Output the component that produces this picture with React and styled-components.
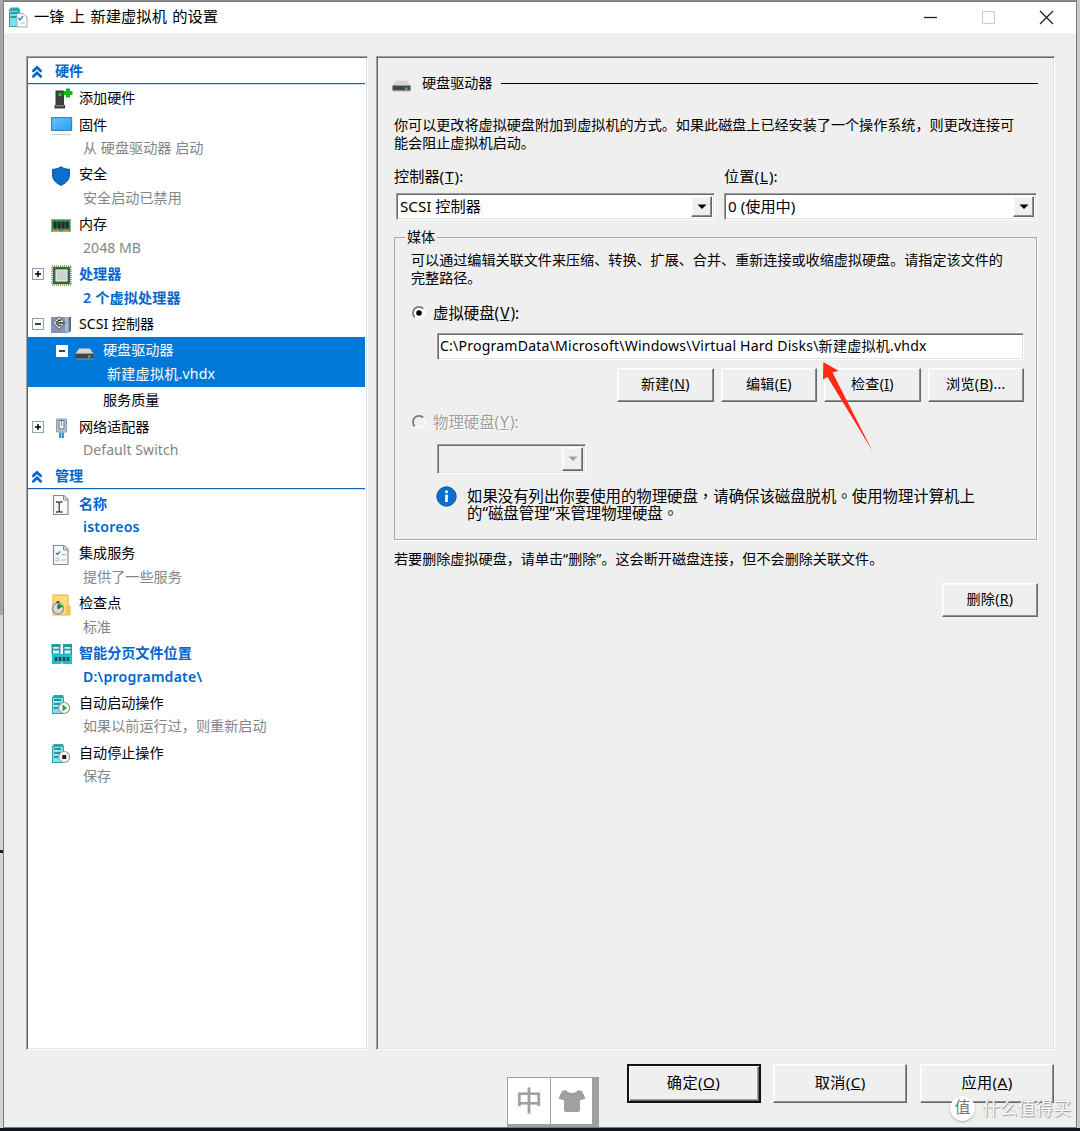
import React from "react";
import styled, { createGlobalStyle, css } from "styled-components";

const GlobalStyle = createGlobalStyle`
  * {
    box-sizing: border-box;
  }

  body {
    margin: 0;
    overflow: hidden;
    background: #c9c9c9;
    font-family: "Noto Sans", "Noto Sans CJK SC", sans-serif;
    font-size: 14.1px;
    color: #000;
  }

  svg {
    display: block;
  }
`;

const sunken = css`
  border: 1px solid;
  border-color: #a0a0a0 #fff #fff #a0a0a0;
  box-shadow: inset 1px 1px 0 #696969, inset -1px -1px 0 #e3e3e3;
`;

const raised = css`
  border: 1px solid;
  border-color: #fff #696969 #696969 #fff;
  box-shadow: inset -1px -1px 0 #8f8f8f, inset 1px 1px 0 #f8f8f8;
`;

const Desktop = styled.div`
  position: relative;
  width: 1080px;
  height: 1131px;
  padding: 1px 3px 3px;
  overflow: hidden;
  background:
    linear-gradient(#10161c, #10161c) 0 100% / 100% 3px no-repeat,
    linear-gradient(#222, #222) 0 850px / 3px 3px no-repeat,
    linear-gradient(#a6a6a6, #a6a6a6) 0 0 / 3px 615px no-repeat,
    linear-gradient(90deg, #d4d4d4 0 3px, #8a8a8a 3px 1077px, #c9c9c9 1077px);
`;

const Window = styled.div`
  display: flex;
  flex-direction: column;
  height: 1127px;
  border: 1px solid #7b7b7b;
  background: #efefef;
`;

const TitleBar = styled.header`
  display: flex;
  align-items: center;
  height: 31px;
  padding: 0 22px 0 4px;
  background: #fff;
`;

const Title = styled.h1`
  flex: 1;
  margin: -4px 0 0 6px;
  font-size: 15.3px;
  font-weight: 400;
  line-height: 24px;
  word-spacing: 1.3px;
`;

const WindowControls = styled.div`
  display: flex;
  gap: 43px;
`;

const Body = styled.main`
  display: flex;
  gap: 8px;
  height: 994px;
  margin: 23px 21px 0 22px;
`;

const Tree = styled.nav`
  ${sunken}
  width: 342px;
  padding: 1px 2px 2px 1px;
  background: #fff;
`;

const SectionHead = styled.div`
  display: flex;
  align-items: center;
  gap: 12px;
  height: 26px;
  padding: 1px 3px 0;
  border-bottom: 1px solid #0f62b8;
  box-shadow: 0 1px 0 #c9dff5;
  color: #0066cc;
  font-weight: 600;
  line-height: 24px;
`;

const Nodes = styled.div`
  padding-top: 1.2px;
`;

const Node = styled.div`
  display: flex;
  align-items: flex-start;
  padding-left: ${props => (props.$level === 2 ? 28 : 4)}px;
  color: ${props => (props.$selected ? "#fff" : props.$changed ? "#0066cc" : "#000")};
  background: ${props => (props.$selected ? "#0078d7" : "transparent")};
  font-weight: ${props => (props.$changed ? 600 : 400)};
`;

const ExpanderSlot = styled.div`
  display: flex;
  align-items: center;
  width: 19px;
  height: 26.5px;
`;

const IconSlot = styled.div`
  display: flex;
  align-items: center;
  width: 28px;
  height: 26.5px;
  padding-top: ${props => (props.$level === 2 ? 7 : 2)}px;
`;

const NodeTitle = styled.div`
  height: 26.5px;
  line-height: 26px;
  white-space: nowrap;
`;

const NodeDetail = styled.div`
  height: 23.3px;
  padding-left: 4px;
  line-height: 20px;
  white-space: nowrap;
  letter-spacing: ${props => (props.$plain ? 0.03 : 0.2)}px;
  color: ${props => (props.$plain ? "#858585" : "inherit")};
`;

const Panel = styled.section`
  ${sunken}
  width: 679px;
  padding: 14px 16px 0 17px;
`;

const PanelHead = styled.div`
  display: flex;
  align-items: center;
  height: 24px;

  svg {
    margin: 5px 0 0 -2px;
  }
`;

const PanelTitle = styled.h2`
  margin: 0 9px 0 11px;
  font-size: 14.1px;
  font-weight: 400;
  line-height: 24px;
`;

const HeadRule = styled.div`
  flex: 1;
  height: 1px;
  background: #000;
`;

const Paragraph = styled.p`
  margin: ${props => props.$top || 0}px 0 0;
  line-height: 18px;
  white-space: nowrap;
`;

const ComboRow = styled.div`
  display: grid;
  grid-template-columns: 321px 314px;
  gap: 9px;
  margin-top: 12px;
`;

const Label = styled.div`
  height: 29px;
  font-size: 15.2px;
  line-height: 24px;

  u {
    margin: 0 1px;
  }
`;

const Combo = styled.div`
  ${sunken}
  display: flex;
  align-items: center;
  justify-content: space-between;
  width: ${props => props.$width}px;
  height: ${props => props.$height || 27}px;
  margin-top: ${props => props.$top || 0}px;
  margin-left: ${props => props.$indent || 0}px;
  padding: 2px 2px 2px 3px;
  background: ${props => (props.$disabled ? "#efefef" : "#fff")};
  font-size: 15.2px;
  line-height: 20px;
`;

const ComboValue = styled.span`
  margin-top: -2px;
`;

const DropButton = styled.div`
  ${raised}
  display: flex;
  align-items: center;
  justify-content: center;
  width: 21px;
  height: 100%;
  background: #efefef;
`;

const Group = styled.fieldset`
  display: block;
  width: 643px;
  height: 311px;
  margin: 9px 0 0;
  padding: 1px 12px 0 16px;
  border: 1px solid #a8a8a8;
  box-shadow: 1px 1px 0 #fff;
`;

const Legend = styled.legend`
  margin-left: -6px;
  padding: 0 2px;
  line-height: 16px;
  font-size: 14.1px;
  background: #efefef;
`;

const RadioRow = styled.div`
  display: flex;
  align-items: center;
  gap: 7px;
  height: 24px;
  margin: ${props => props.$top}px 0 0 1px;
  font-size: 15.4px;
  line-height: 22px;
  color: ${props => (props.$disabled ? "#a0a0a0" : "#000")};
  text-shadow: ${props => (props.$disabled ? "1px 1px 0 #fff" : "none")};

  span {
    margin-top: 2px;
  }

  u {
    margin: 0 1px;
  }
`;

const PathField = styled.div`
  ${sunken}
  width: 587px;
  height: 27px;
  margin: 8px 0 0 26px;
  padding-left: 2px;
  background: #fff;
  line-height: 24px;
  letter-spacing: 0.19px;
  white-space: nowrap;
`;

const ButtonRow = styled.div`
  display: flex;
  justify-content: flex-end;
  gap: ${props => props.$gap || 7.2}px;
  margin-top: ${props => props.$top}px;
`;

const Button = styled.button`
  ${raised}
  flex: none;
  width: ${props => (props.$large ? 134 : 96.3)}px;
  height: ${props => (props.$large ? 39 : 34)}px;
  padding: 0 0 ${props => (props.$large ? 5 : 4)}px;
  background: #efefef;
  font-family: inherit;
  font-size: ${props => (props.$large ? 15.2 : 14.1)}px;
  letter-spacing: ${props => (props.$large ? 0.4 : 0.3)}px;
  color: #000;

  ${props => props.$primary && css`
    border: 2px solid #111;
    box-shadow: inset 1px 1px 0 #fff, inset -1px -1px 0 #696969, inset -2px -2px 0 #a0a0a0;
  `}
`;

const Note = styled.div`
  display: flex;
  gap: 10px;
  margin: 12px 0 0 25px;
`;

// The TC face centres full-width punctuation in its square
const NoteText = styled.p`
  margin: 2px 0 0;
  font-family: "Noto Sans", "Noto Sans CJK TC", sans-serif;
  font-size: 15.4px;
  line-height: 17px;
  white-space: nowrap;
`;

const Arrow = styled.svg`
  position: absolute;
  left: 820px;
  top: 360px;
`;

// Input method bar that floats over the bottom of the window
const ImeBar = styled.div`
  position: absolute;
  left: 507px;
  top: 1077px;
  display: grid;
  grid-template-columns: 42px 41px;
  gap: 1px;
  width: 92px;
  height: 50px;
  padding: 1px 7px 3px 1px;
  background: #a0a0a0;
`;

const ImeKey = styled.div`
  display: flex;
  align-items: center;
  justify-content: center;
  background: #fff;
  color: #a0a0a0;
  font-size: 27px;
  font-weight: 500;
  line-height: 44px;
`;

const Watermark = styled.div`
  position: absolute;
  left: 950px;
  top: 1095px;
  display: flex;
  align-items: center;
  gap: 7px;
  color: #fff;
  font-size: 17.8px;
  line-height: 26px;
  text-shadow: 1px 1px 1px #999, 0 0 1px #aaa;
`;

const WatermarkSeal = styled.span`
  width: 25px;
  height: 25px;
  border-radius: 50%;
  background: #fff;
  box-shadow: 0 1px 2px #aaa;
  color: #777;
  font-size: 16px;
  line-height: 23px;
  text-align: center;
  text-shadow: none;
`;

const Expander = ({ open, bare }) => (
  <svg width="12" height="12" viewBox="0 0 12 12">
    <rect x=".5" y=".5" width="11" height="11" fill="#fff" stroke={bare ? "#fff" : "#8aa0b8"} />
    <path d={open ? "M3 6h6" : "M3 6h6M6 3v6"} stroke="#000" strokeWidth="1.5" />
  </svg>
);

const Chevrons = () => (
  <svg width="12" height="13" viewBox="0 0 12 13" fill="#0066cc">
    <path d="M6 .5 10.800 5v2.200H9.200L6 4.200 2.800 7.200H1.200V5zM6 6l4.800 4.500v2.200H9.200L6 9.700l-3.200 3H1.200v-2.200z" />
  </svg>
);

const Server = ({ children }) => (
  <svg width="21" height="21" viewBox="0 0 21 21">
    <path d="M1 3.500 3 1h9l1 2.500V20H1z" fill="#2aa5b0" />
    <path d="M2 4h10v15H2z" fill="#7fe3ea" />
    <path d="M3 6h7M3 10h7M3 14h4" stroke="#127a85" strokeWidth="1.300" />
    <path d="M4 7.500h2M4 11.500h2" stroke="#fff" />
    {children}
  </svg>
);

const Sheet = ({ children }) => (
  <svg width="21" height="22" viewBox="0 0 21 22">
    <path d="M2.500 1.500h10.500L17 5.500v15H2.500z" fill="#fafafa" stroke="#8b8b8b" strokeWidth="1.200" />
    <path d="M12.500 1.500v4.500H17" fill="#ddd" stroke="#8b8b8b" />
    {children}
  </svg>
);

const Disk = ({ width = 19 }) => (
  <svg width={width} height="12" viewBox="0 0 19 12">
    <path d="M4 .5h11l3.500 5.500H.5z" fill="#d6d6d6" />
    <path d="M.5 5.500h18v5h-18z" fill="#454545" />
    <path d="M.5 5.500h18M.5 11h18" stroke="#9a9a9a" strokeWidth=".8" />
    <rect x="13" y="7.500" width="2.500" height="2" fill="#35d63e" />
  </svg>
);

const icons = {
  add: (
    <svg width="22" height="22" viewBox="0 0 22 22">
      <path d="M4.500 2.500h8.500V17H4.500zM3.500 17h10.500v3.500H3.500z" fill="#3c3c3c" />
      <path d="M4.500 17.800h8.500" stroke="#999" />
      <circle cx="9" cy="6.500" r="2" fill="#12c41c" />
      <path d="M12.500 3H15V.5h4V3h2.500v4H19v2.500h-4V7h-2.500z" fill="#18b51e" />
    </svg>
  ),
  firmware: (
    <svg width="22" height="20" viewBox="0 0 22 20">
      <defs>
        <linearGradient id="screen" x2="1" y2="1">
          <stop stopColor="#6cc3ff" />
          <stop offset="1" stopColor="#22a0f4" />
        </linearGradient>
      </defs>
      <rect x=".6" y="1.600" width="20" height="12.800" fill="url(#screen)" stroke="#3d86b8" strokeWidth="1.200" />
      <path d="M9 15h3v2H9z" fill="#e8edf0" />
      <path d="M1 18.500h19" stroke="#cbd3d8" strokeWidth="1.300" />
    </svg>
  ),
  security: (
    <svg width="20" height="20" viewBox="0 0 20 20">
      <path d="M10 .8C7.500 2.500 4.500 3.300 1.500 3.300V9c0 5 4 8.500 8.500 10.400C14.500 17.500 18.500 14 18.500 9V3.300C15.500 3.300 12.500 2.500 10 .8z" fill="#0a6fd0" stroke="#17568f" />
    </svg>
  ),
  memory: (
    <svg width="20" height="14" viewBox="0 0 20 14">
      <path d="M.5.5h19v12H.5z" fill="#3f8a5b" stroke="#7eb18d" />
      <path d="M2 3h16v6H2z" fill="#2d5c43" />
      <path d="M3 2.500h2.500v7H3zM7 2.500h2.500v7H7zM11 2.500h2.500v7H11zM15 2.500h2.500v7H15z" fill="#232b27" />
      <path d="M2 12h6M12 12h6" stroke="#e09537" strokeWidth="2" />
    </svg>
  ),
  cpu: (
    <svg width="21" height="21" viewBox="0 0 21 21">
      <rect x="1" y="1" width="19" height="19" fill="none" stroke="#b9a469" strokeWidth="2" strokeDasharray="1 1" />
      <rect x="1.800" y="1.800" width="17.400" height="17.400" fill="#2f6a4e" />
      <rect x="5" y="5" width="11" height="11" fill="#d0d0d0" stroke="#f4f4f4" />
    </svg>
  ),
  scsi: (
    <svg width="21" height="18" viewBox="0 0 21 18">
      <path d="M0 1h20v14l-3 2H0z" fill="#7f96b8" />
      <path d="M14 1h3v15h-3z" fill="#a9bbd2" />
      <path d="M18.500 1H20v14l-1.500 1z" fill="#4d658a" />
      <path d="m8 .7 6.300 6.300L8 13.300 1.700 7z" fill="#e7e7e7" stroke="#555" />
      <path d="M10 4.500 8 4 5 7l3 3 2.500-1M7 7h6" fill="none" stroke="#333" strokeWidth="1.300" />
    </svg>
  ),
  disk: <Disk />,
  network: (
    <svg width="21" height="22" viewBox="0 0 21 22">
      <path d="M5.500 2h10v13h-10z" fill="#b8c9da" stroke="#8d9eb0" />
      <path d="M8 3.500h5V12H8z" fill="#eef3f8" stroke="#60758b" />
      <path d="M10.500 4v5" stroke="#8fa0b2" />
      <path d="M8 15.500h5V21H8z" fill="#2e9ec4" />
      <path d="M10.500 15.500V21" stroke="#83d2ea" />
    </svg>
  ),
  name: (
    <Sheet>
      <path d="M5 8h2.200l1 1 1-1h2.200M8.200 9v8M5 18h2.200l1-1 1 1h2.200" fill="none" stroke="#444" strokeWidth="1.300" />
    </Sheet>
  ),
  services: (
    <Sheet>
      <path d="m5 9 1.500 1.500L9 7.500" fill="none" stroke="#2484d8" strokeWidth="1.500" />
      <path d="M10.500 10.500H15M10.500 16H15" stroke="#aaa" />
      <rect x="5" y="14" width="3" height="3" fill="none" stroke="#bbb" />
    </Sheet>
  ),
  checkpoint: (
    <svg width="21" height="22" viewBox="0 0 21 22">
      <path d="M2 1h15v11h2v9H2z" fill="#fbdc76" stroke="#dfb445" />
      <path d="M15 20v-8h4v8z" fill="#f3c84e" />
      <circle cx="7" cy="14.500" r="5.500" fill="#d9d9d9" stroke="#929292" strokeWidth="1.300" />
      <path d="M5.500 8h3" stroke="#555" strokeWidth="2" />
      <path d="m7 9.500 5.500 3L7 15z" fill="#169b25" />
      <path d="M7 15v-4" stroke="#333" />
    </svg>
  ),
  paging: (
    <svg width="22" height="22" viewBox="0 0 22 22">
      <path d="M.5 1h9v10h-9zM12 1h9v10h-9z" fill="#239aa3" />
      <path d="M2 4h6v1.800H2zM2 7.500h6v3H2zM13.500 4h6v1.800h-6zM13.500 7.500h6v3h-6z" fill="#d2f7f8" />
      <path d="M1 11h20v10H1z" fill="#17c2d0" />
      <path d="M3.500 14h15v4h-15z" fill="#3c8d94" />
      <path d="M4 14h2v4H4zM8 14h2v4H8zM12 14h2v4h-2zM16 14h2v4h-2z" fill="#164c54" />
      <path d="M11 19v2" stroke="#fff" />
    </svg>
  ),
  start: (
    <Server>
      <circle cx="13.200" cy="14" r="5.500" fill="#f6f6f6" stroke="#999" strokeWidth="1.200" />
      <path d="m11.500 10.500 4.500 3.500-4.500 3.500z" fill="#22a82b" />
    </Server>
  ),
  stop: (
    <Server>
      <circle cx="13.200" cy="14" r="5.500" fill="#f6f6f6" stroke="#999" strokeWidth="1.200" />
      <path d="M11.200 12h4v4h-4z" fill="#222" />
    </Server>
  ),
};

const AppIcon = () => (
  <svg width="20" height="21" viewBox="0 0 20 21">
    <path d="M1 3 3 .5h8L12 3v17H1z" fill="#28a7b2" />
    <path d="M2 4h8v15H2z" fill="#77dfe7" />
    <path d="M2.500 6h8M2.500 10h6" stroke="#147d88" strokeWidth="1.400" />
    <path d="M9 6.500h6l4 3.500v10H9z" fill="#fafafa" stroke="#aaa" />
    <path d="m10.500 11 1.500 2 3-4" fill="none" stroke="#2484d8" strokeWidth="1.300" />
    <path d="M13 16h4" stroke="#bbb" />
  </svg>
);

const Radio = ({ checked }) => (
  <svg width="14" height="14" viewBox="0 0 14 14">
    <circle cx="7" cy="7" r="6" fill={checked ? "#fff" : "#efefef"} stroke="#fff" strokeWidth="1.500" />
    <path d="M2.700 11.300A6 6 0 0 1 11.300 2.700" fill="none" stroke="#777" strokeWidth="1.700" />
    {checked && <circle cx="7" cy="7" r="2.800" fill="#000" />}
  </svg>
);

const Drop = ({ disabled }) => (
  <DropButton>
    <svg width="10" height="6" viewBox="0 0 10 6">
      <path d="M.5.5h9L5 5z" fill={disabled ? "#a0a0a0" : "#000"} />
    </svg>
  </DropButton>
);

const InfoIcon = () => (
  <svg width="21" height="21" viewBox="0 0 21 21">
    <circle cx="10.500" cy="10.500" r="9.700" fill="#0b6fce" stroke="#0a559e" />
    <path d="M9.200 4.500h2.600V7H9.200zM9.200 8.500h2.600V16H9.200z" fill="#fff" />
  </svg>
);

const hardware = [
  { icon: "add", title: "添加硬件" },
  { icon: "firmware", title: "固件", detail: "从 硬盘驱动器 启动" },
  { icon: "security", title: "安全", detail: "安全启动已禁用" },
  { icon: "memory", title: "内存", detail: "2048 MB" },
  { icon: "cpu", title: "处理器", detail: "2 个虚拟处理器", expander: "closed", changed: true },
  { icon: "scsi", title: "SCSI 控制器", expander: "open" },
  { icon: "disk", title: "硬盘驱动器", detail: "新建虚拟机.vhdx", expander: "open", level: 2, selected: true },
  { title: "服务质量", level: 2 },
  { icon: "network", title: "网络适配器", detail: "Default Switch", expander: "closed" },
];

const management = [
  { icon: "name", title: "名称", detail: "istoreos", changed: true },
  { icon: "services", title: "集成服务", detail: "提供了一些服务" },
  { icon: "checkpoint", title: "检查点", detail: "标准" },
  { icon: "paging", title: "智能分页文件位置", detail: "D:\\programdate\\", changed: true },
  { icon: "start", title: "自动启动操作", detail: "如果以前运行过，则重新启动" },
  { icon: "stop", title: "自动停止操作", detail: "保存" },
];

const TreeSection = ({ title, items }) => (
  <>
    <SectionHead><Chevrons />{title}</SectionHead>
    <Nodes>
      {items.map(item => (
        <Node
          key={item.title}
          $level={item.level}
          $selected={item.selected}
          $changed={item.changed}
        >
          <ExpanderSlot>
            {item.expander && <Expander open={item.expander === "open"} bare={item.selected} />}
          </ExpanderSlot>
          <IconSlot $level={item.level}>{icons[item.icon]}</IconSlot>
          <div>
            <NodeTitle>{item.title}</NodeTitle>
            {item.detail && (
              <NodeDetail $plain={!item.changed && !item.selected}>{item.detail}</NodeDetail>
            )}
          </div>
        </Node>
      ))}
    </Nodes>
  </>
);

const DiskSettings = () => (
  <Panel>
    <PanelHead>
      <Disk width={19} />
      <PanelTitle>硬盘驱动器</PanelTitle>
      <HeadRule />
    </PanelHead>
    <Paragraph $top={21}>
      你可以更改将虚拟硬盘附加到虚拟机的方式。如果此磁盘上已经安装了一个操作系统，则更改连接可<br />
      能会阻止虚拟机启动。
    </Paragraph>
    <ComboRow>
      <div>
        <Label>控制器(<u>T</u>):</Label>
        <Combo $width={319} $indent={2}><ComboValue>SCSI 控制器</ComboValue><Drop /></Combo>
      </div>
      <div>
        <Label>位置(<u>L</u>):</Label>
        <Combo $width={313}><ComboValue>0 (使用中)</ComboValue><Drop /></Combo>
      </div>
    </ComboRow>
    <Group>
      <Legend>媒体</Legend>
      <Paragraph $top={5}>
        可以通过编辑关联文件来压缩、转换、扩展、合并、重新连接或收缩虚拟硬盘。请指定该文件的<br />
        完整路径。
      </Paragraph>
      <RadioRow $top={14}><Radio checked /><span>虚拟硬盘(<u>V</u>):</span></RadioRow>
      <PathField>C:\ProgramData\Microsoft\Windows\Virtual Hard Disks\新建虚拟机.vhdx</PathField>
      <ButtonRow $top={8}>
        <Button>新建(<u>N</u>)</Button>
        <Button>编辑(<u>E</u>)</Button>
        <Button>检查(<u>I</u>)</Button>
        <Button>浏览(<u>B</u>)...</Button>
      </ButtonRow>
      <RadioRow $top={8} $disabled><Radio /><span>物理硬盘(<u>Y</u>):</span></RadioRow>
      <Combo $width={149} $height={30} $top={10} $indent={26} $disabled>
        <span />
        <Drop disabled />
      </Combo>
      <Note>
        <InfoIcon />
        <NoteText>
          如果没有列出你要使用的物理硬盘，请确保该磁盘脱机。使用物理计算机上<br />
          的“磁盘管理”来管理物理硬盘。
        </NoteText>
      </Note>
    </Group>
    <Paragraph $top={10}>若要删除虚拟硬盘，请单击“删除”。这会断开磁盘连接，但不会删除关联文件。</Paragraph>
    <ButtonRow $top={15}>
      <Button>删除(<u>R</u>)</Button>
    </ButtonRow>
  </Panel>
);

const Footer = styled.footer`
  padding-right: 22px;
`;

const App = () => (
  <Desktop>
    <GlobalStyle />
    <Window>
      <TitleBar>
        <AppIcon />
        <Title>一锋 上 新建虚拟机 的设置</Title>
        <WindowControls>
          <svg width="15" height="15" viewBox="0 0 15 15"><path d="M1 7.500h13" stroke="#222" strokeWidth="1.300" /></svg>
          <svg width="15" height="15" viewBox="0 0 15 15"><path d="M1.500 1.500h12v12h-12z" fill="none" stroke="#ccc" /></svg>
          <svg width="15" height="15" viewBox="0 0 15 15"><path d="m1 1 13 13M14 1 1 14" stroke="#222" strokeWidth="1.300" /></svg>
        </WindowControls>
      </TitleBar>
      <Body>
        <Tree>
          <TreeSection title="硬件" items={hardware} />
          <TreeSection title="管理" items={management} />
        </Tree>
        <DiskSettings />
      </Body>
      <Footer>
        <ButtonRow $top={14} $gap={12.75}>
          <Button $large $primary>确定(<u>O</u>)</Button>
          <Button $large>取消(<u>C</u>)</Button>
          <Button $large>应用(<u>A</u>)</Button>
        </ButtonRow>
      </Footer>
    </Window>
    <Arrow width="56" height="94" viewBox="0 0 56 94">
      <path d="M3.300 2 18.500 10.800 12.500 12.500 52.500 91 7.500 17 3 19.500z" fill="#ff2a14" />
    </Arrow>
    <ImeBar>
      <ImeKey>中</ImeKey>
      <ImeKey>
        <svg width="28" height="24" viewBox="0 0 28 24">
          <path d="M8 1c2 4 10 4 12 0l4 1 3.500 7.500-5.500 2V21q0 2-2 2H8q-2 0-2-2v-9.500L.5 9.500 4 2z" fill="#a0a0a0" />
        </svg>
      </ImeKey>
    </ImeBar>
    <Watermark><WatermarkSeal>值</WatermarkSeal>什么值得买</Watermark>
  </Desktop>
);

export default App;
